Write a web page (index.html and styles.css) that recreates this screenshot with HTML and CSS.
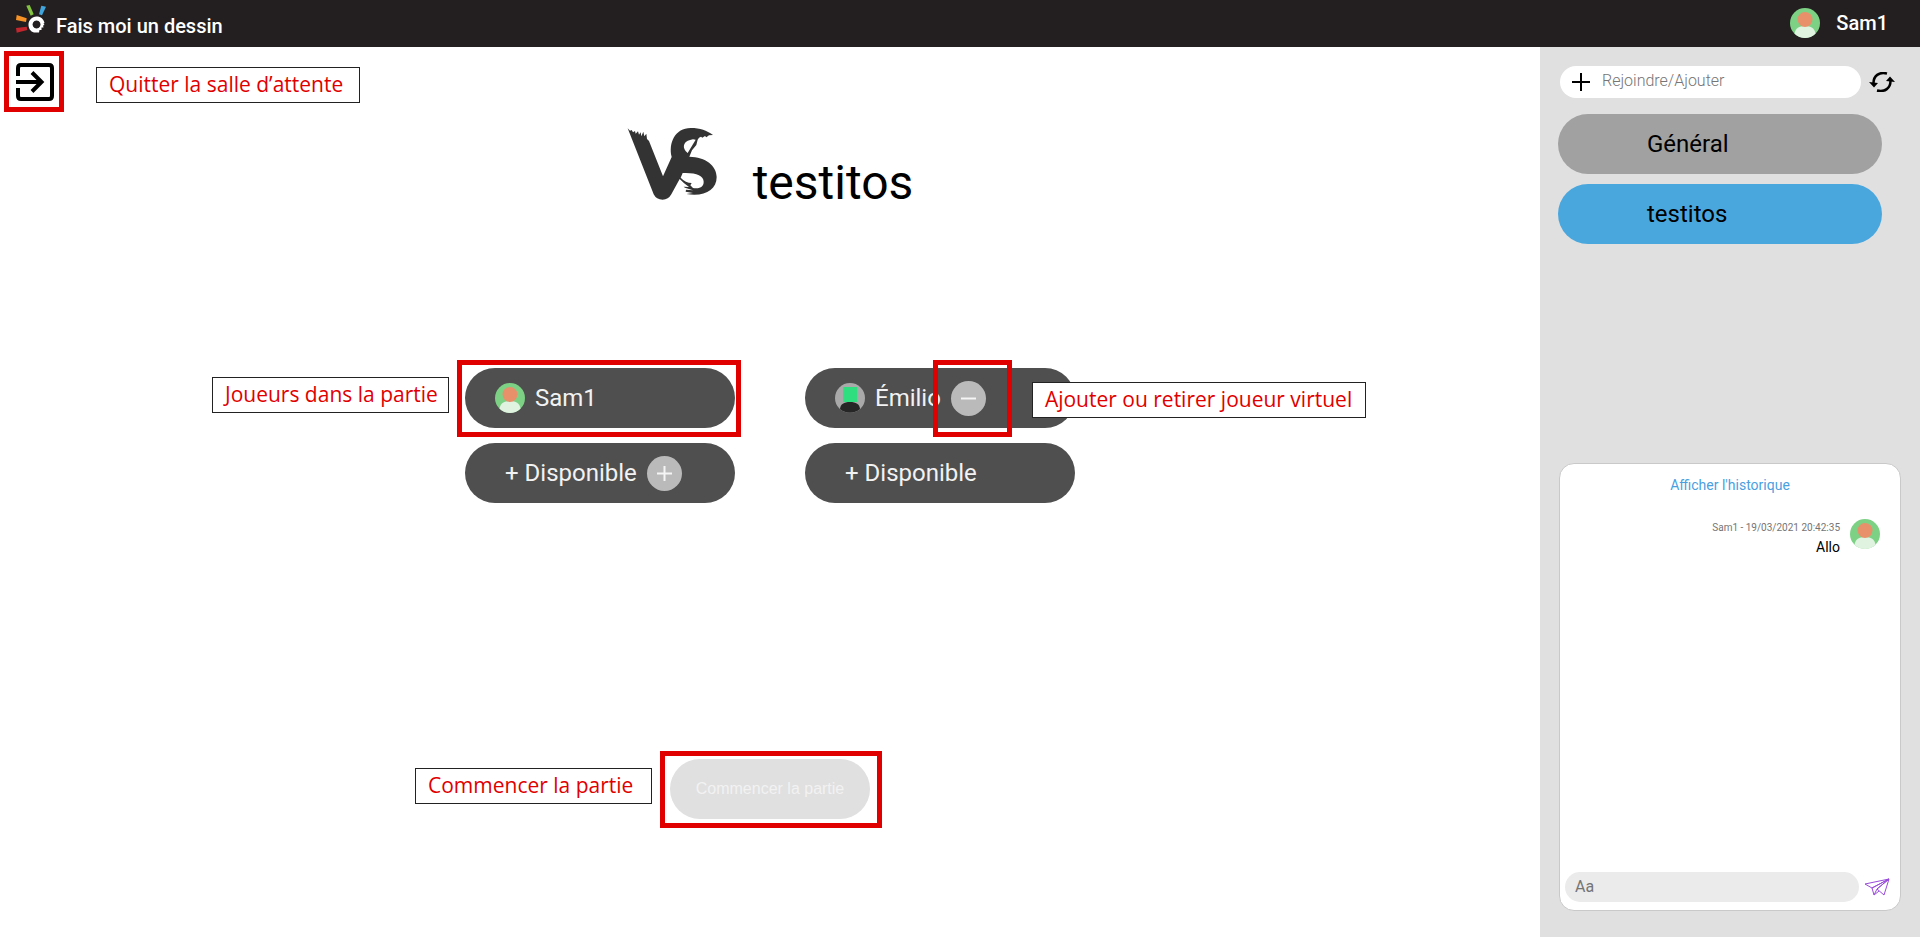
FILE: index.html
```html
<!DOCTYPE html>
<html lang="fr">
<head>
<meta charset="utf-8">
<title>Fais moi un dessin</title>
<link rel="stylesheet" href="styles.css">
</head>
<body>
<svg class="defs" aria-hidden="true">
  <symbol id="avatar-green" viewBox="0 0 30 30">
    <circle cx="15" cy="15" r="15" fill="#7dd185"/>
    <path d="M4.500 25.700C5.500 20 9 18 15 18s9.500 2 10.500 7.700A15 15 0 0 1 4.500 25.700Z" fill="#e0f3e0"/>
    <circle cx="15" cy="11.500" r="7.500" fill="#e8906a"/>
  </symbol>
  <symbol id="avatar-bot" viewBox="0 0 30 30">
    <circle cx="15" cy="15" r="15" fill="#a9a9a9"/>
    <path d="M5 26C5.500 21 9 19 15 19s9.500 2 10 7A15 15 0 0 1 5 26Z" fill="#262626"/>
    <rect x="8" y="4" width="14" height="15" fill="#2fde7e"/>
  </symbol>
</svg>
<header class="topbar">
  <a class="brand" href="#">
    <svg class="logo" viewBox="0 0 30 29" aria-hidden="true">
      <path d="M10.300.700L13.700 0l4 9.300-3 1.400Z" fill="#85c441"/>
      <path d="M25.300.700l4.700 1-4 8.600-3-1Z" fill="#41a5dd"/>
      <path d="M.700 10l10 3.300L10 17 0 15Z" fill="#f79226"/>
      <path d="M0 23l10.700-1.300.600 3.300L.700 27.700Z" fill="#c1272d"/>
      <path fill="#fff" fill-rule="evenodd" d="M20.500 11.500C25 11.500 27.500 14 28.500 18l-1 .500 1 1.500-1.500.500.500 2-2 0 0 2.500-2 0-.500 2.500H18C14.500 26.500 12.500 23.500 12.500 19.500S16 11.500 20.500 11.500ZM20.500 15.500a4 4 0 1 0 .100 0Z"/>
    </svg>
    <span>Fais moi un dessin</span>
  </a>
  <div class="account"><svg class="avatar"><use href="#avatar-green"/></svg><span>Sam1</span></div>
</header>
<div class="page">
  <main class="room">
    <div class="quit-wrap">
      <button class="quit" aria-label="Quitter">
        <svg viewBox="0 0 38 38" fill="none" stroke="#000" stroke-width="4" aria-hidden="true"><path d="M2 13V5q0-3 3-3h28q3 0 3 3v28q0 3-3 3H5q-3 0-3-3v-8"/><path d="M0 19h26M16 9.500l9.500 9.500-9.500 9.500"/></svg>
      </button>
      <span class="frame frame-quit"></span>
      <span class="note note-quit">Quitter la salle d’attente</span>
    </div>
    <div class="title">
      <svg class="versus" viewBox="24 22 270 222" fill="#333" aria-hidden="true">
        <path fill-rule="evenodd" d="M26 26L33 33 38 31 42 38 48 34 50 42 57 35 60 45 65 38 67 50 73 36 76 50 82 42 84 58 90 64 132 170 158 112C148 70 168 25 215 25C245 25 262 32 282 46L270 47 262 53 258 49 250 54 246 51 240 54 236 60 232 76 219 92 211 111C260 112 293 138 293 172C293 212 255 232 202 223L222 220 200 216 201 210 222 212 198 204 194 201 210 202Q195 192 182 178L157 224Q148 240 131 240 112 240 104 224ZM230 60L206 100C190 88 188 64 222 59ZM191 160L185 174Q200 190 218 190L214 197 222 205C245 208 254 200 254 186C254 168 230 158 191 160Z"/>
      </svg>
      <h1>testitos</h1>
    </div>
    <div class="players">
      <div class="player"><svg class="avatar"><use href="#avatar-green"/></svg><span>Sam1</span>
        <span class="frame frame-player"></span><span class="note note-player">Joueurs dans la partie</span></div>
      <div class="player"><svg class="avatar"><use href="#avatar-bot"/></svg><span>Émilio</span>
        <div class="toggle-wrap"><button class="toggle" aria-label="Retirer"><svg viewBox="0 0 15 15" aria-hidden="true"><path d="M0 7.500h15"/></svg></button><span class="frame frame-toggle"></span><span class="note note-toggle">Ajouter ou retirer joueur virtuel</span></div></div>
      <div class="player open"><span>+ Disponible</span><button class="toggle" aria-label="Ajouter"><svg viewBox="0 0 15 15" aria-hidden="true"><path d="M0 7.500h15M7.500 0v15"/></svg></button></div>
      <div class="player open"><span>+ Disponible</span></div>
    </div>
    <div class="start-wrap">
      <button class="start" disabled>Commencer la partie</button>
      <span class="frame frame-start"></span><span class="note note-start">Commencer la partie</span>
    </div>
  </main>
  <aside class="side">
    <div class="channels">
      <div class="search-row">
        <div class="search">
          <svg viewBox="0 0 18 18" stroke="#000" stroke-width="2" aria-hidden="true"><path d="M0 9h18M9 0v18"/></svg>
          <input type="text" aria-label="Rejoindre/Ajouter" placeholder="Rejoindre/Ajouter">
        </div>
        <button class="refresh" aria-label="Rafraîchir">
          <svg viewBox="0 0 26 20" aria-hidden="true"><path d="M18 1.500C10 -.500 4.500 4 4.500 11M8 18.500C16 20.500 21.500 16 21.500 9" fill="none" stroke="#000" stroke-width="2.500"/><path d="M0 10l9 1-4 4.500ZM26 10l-9-1 4-4.500Z"/></svg>
        </button>
      </div>
      <button class="channel">Général</button>
      <button class="channel active">testitos</button>
    </div>
    <section class="chat">
      <a class="history" href="#">Afficher l'historique</a>
      <div class="message">
        <div class="message-body"><span class="meta">Sam1 - 19/03/2021 20:42:35</span><span>Allo</span></div>
        <svg class="avatar"><use href="#avatar-green"/></svg>
      </div>
      <form class="composer">
        <input type="text" aria-label="Message" placeholder="Aa">
        <button type="button" class="send" aria-label="Envoyer">
          <svg viewBox="0 0 26 18" fill="none" stroke="#9a4bdc" stroke-linejoin="round" aria-hidden="true"><path d="M25 1L1 6l7 4ZM25 1L8 10l2 7 3-6ZM25 1L13 11l7 6ZM10 17l5-4"/></svg>
        </button>
      </form>
    </section>
  </aside>
</div>
</body>
</html>
```
FILE: styles.css
```css
* { box-sizing: border-box; }
body { margin: 0; min-height: 100vh; display: flex; flex-direction: column; font-family: Roboto, sans-serif; color: #000; background: #fff; }
button { border: 0; padding: 0; font-family: inherit; background: none; cursor: pointer; }
input { border: 0; outline: 0; min-width: 0; background: none; font-family: inherit; font-size: 16px; }
.defs { position: absolute; width: 0; height: 0; }
.avatar { width: 30px; height: 30px; flex: none; display: block; }

.topbar { height: 47px; display: flex; justify-content: space-between; align-items: flex-start; padding: 0 32px 0 16px; background: #231f20; color: #fff; font-size: 20px; font-weight: 500; }
.brand { display: flex; align-items: flex-end; gap: 10px; padding-top: 5px; color: inherit; text-decoration: none; line-height: 24px; }
.brand span { padding-top: 9px; }
.logo { width: 30px; height: 29px; margin-bottom: 4px; }
.account { display: flex; align-items: center; gap: 16px; padding-top: 8px; }

.page { flex: 1; display: flex; }
.room { flex: 1; display: flex; flex-direction: column; align-items: center; }
.quit-wrap { position: relative; align-self: flex-start; padding: 16px; }
.quit, .quit svg { display: block; width: 38px; height: 38px; }
.title { display: flex; align-items: flex-end; gap: 36px; margin-top: 10px; }
.versus { width: 90px; height: 74px; margin-bottom: 8px; }
h1 { margin: 0; font-size: 48px; font-weight: 400; line-height: 52px; }
.players { display: grid; grid-template-columns: 270px 270px; gap: 15px 70px; margin-top: 159px; }
.player { position: relative; display: flex; align-items: center; gap: 10px; height: 60px; padding-left: 30px; border-radius: 30px; background: #4f4f4f; color: #f2f2f2; font-size: 24px; }
.player.open { padding-left: 40px; }
.toggle-wrap { position: relative; }
.toggle { display: grid; place-items: center; width: 35px; height: 35px; border-radius: 50%; background: #bababa; }
.toggle svg { width: 15px; height: 15px; stroke: #f5f5f5; stroke-width: 2; }
.start-wrap { position: relative; margin-top: 256px; }
.start { width: 200px; height: 60px; border-radius: 30px; background: #e0e0e0; color: #f2f2f2; font: 16px "Liberation Sans", Arial, sans-serif; display: block; }

.frame { position: absolute; border: 5px solid #e00000; pointer-events: none; }
.frame-quit { left: 4px; top: 4px; width: 60px; height: 61px; }
.frame-player { inset: -8px -6px -9px -8px; }
.frame-start { inset: -8px -12px -9px -10px; }
.frame-toggle { inset: -21px -26px -21px -18px; }
.note { position: absolute; z-index: 1; height: 36px; padding-left: 12px; border: 1px solid #222; background: #fff; color: #e00000; font: 21px/32px "Open Sans", sans-serif; white-space: nowrap; }
.note-quit { left: 96px; top: 20px; width: 264px; }
.note-player { right: 286px; top: 9px; width: 237px; }
.note-toggle { left: 81px; top: 1px; width: 334px; }
.note-start { right: 218px; top: 9px; width: 237px; }

.side { width: 380px; display: flex; flex-direction: column; justify-content: space-between; padding: 19px 19px 26px; background: #e0e0e0; }
.channels { display: flex; flex-direction: column; align-items: flex-start; gap: 10px; }
.search-row { display: flex; align-items: center; gap: 8px; margin: 0 0 6px 1px; }
.search { display: flex; align-items: center; gap: 12px; width: 301px; height: 32px; padding: 0 12px; border-radius: 16px; background: #fff; }
.search svg { width: 18px; height: 18px; flex: none; }
.search input { flex: 1; height: 28px; padding: 0 0 4px; font-weight: 300; }
.search input::placeholder { color: #757575; }
.refresh svg { display: block; width: 26px; height: 20px; }
.channel { width: 324px; height: 60px; margin-left: -1px; padding-left: 89px; border-radius: 30px; background: #a1a1a1; font-size: 24px; text-align: left; }
.channel.active { background: #4aa7de; }
.chat { display: flex; flex-direction: column; flex: 0 0 448px; border: 1px solid #c9c9c9; border-radius: 15px; background: #fff; padding: 12px 5px 8px; }
.history { align-self: center; color: #4a9fdf; font-size: 14px; line-height: 18px; text-decoration: none; }
.message { display: flex; justify-content: flex-end; gap: 10px; padding: 25px 15px 0 0; font-size: 14px; }
.message-body { display: flex; flex-direction: column; align-items: flex-end; gap: 1px; line-height: 18px; }
.meta { color: #757575; font-size: 10px; line-height: 18px; }
.composer { display: flex; align-items: center; gap: 5px; margin-top: auto; }
.composer input { flex: 0 0 294px; height: 30px; padding: 0 10px 2px; border-radius: 15px; background: #ebebeb; }
.send svg { display: block; width: 26px; height: 18px; }
```
